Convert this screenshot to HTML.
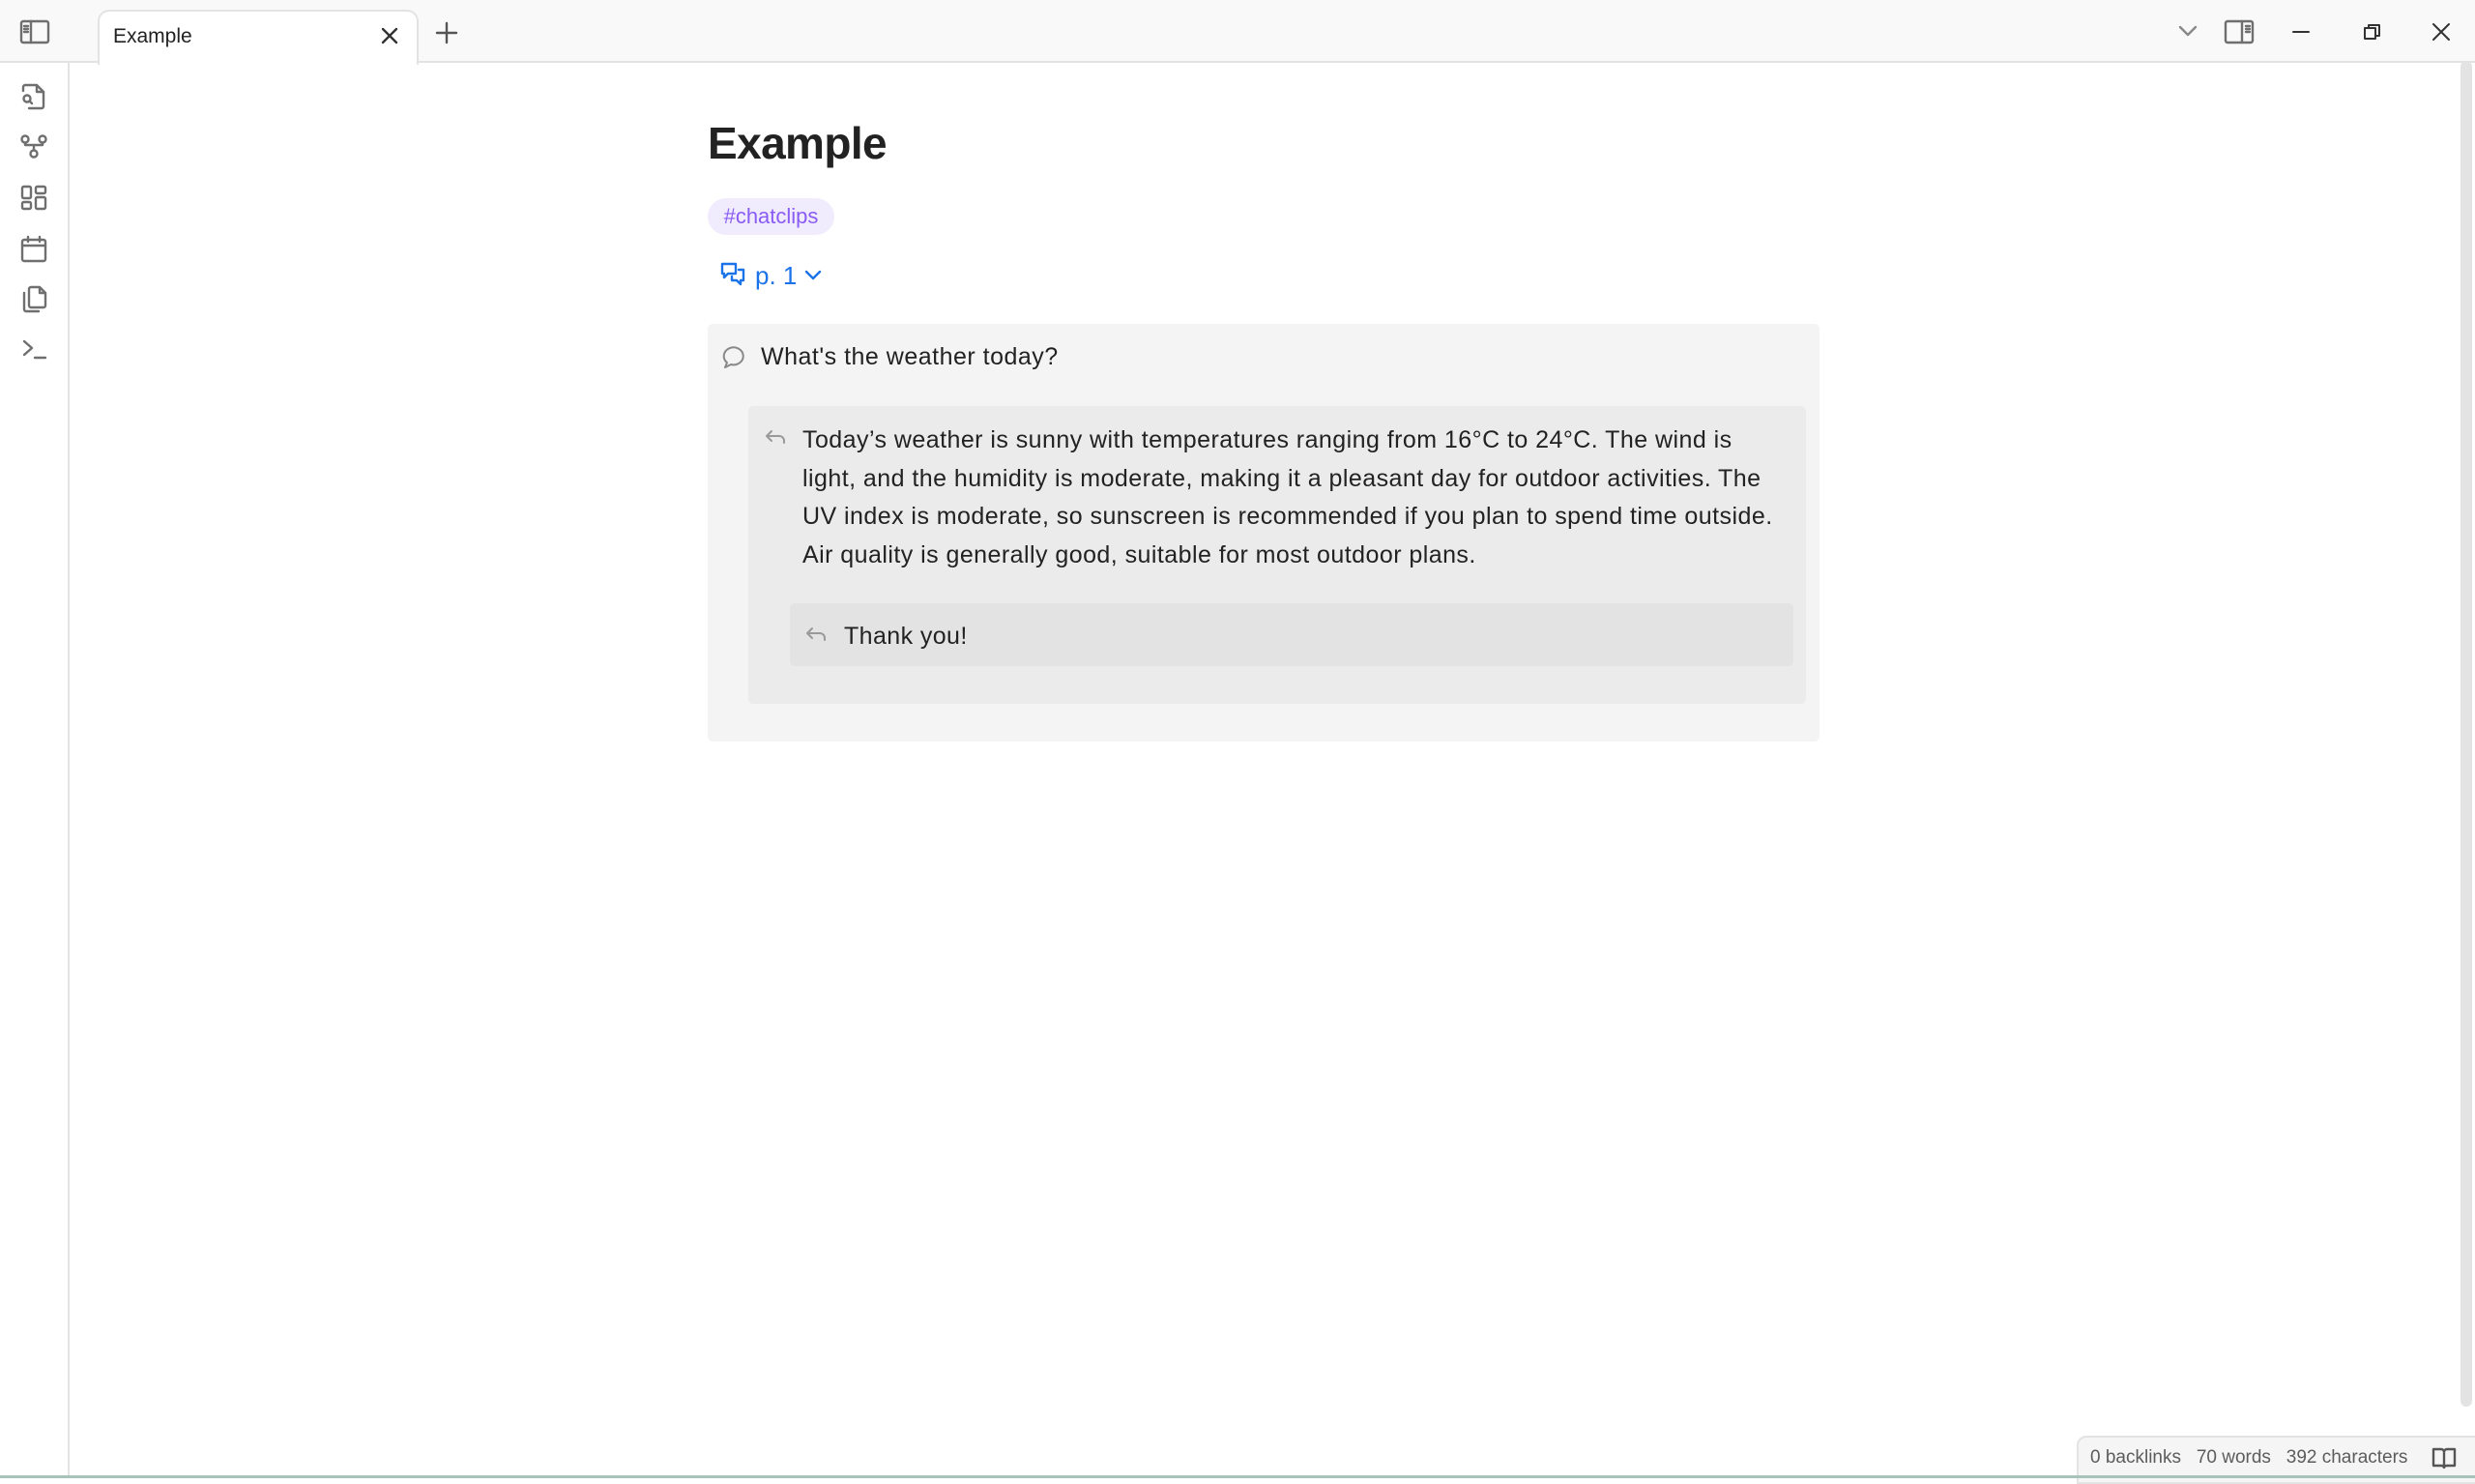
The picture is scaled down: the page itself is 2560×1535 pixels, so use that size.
<!DOCTYPE html>
<html><head><meta charset="utf-8"><style>
*{margin:0;padding:0;box-sizing:border-box}
body{width:2560px;height:1529px;background:#fff;font-family:"Liberation Sans",sans-serif;position:relative;overflow:hidden;color:#222}
.abs{position:absolute}
#top{left:0;top:0;width:2560px;height:65px;background:#f9f9f9;border-bottom:2px solid #e3e3e3}
#tab{left:101px;top:10px;width:332px;height:57px;background:#fff;border:2px solid #e3e3e3;border-bottom:none;border-radius:12px 12px 0 0}
#side{left:0;top:65px;width:72px;height:1464px;background:#fff;border-right:2px solid #e3e3e3}
svg{position:absolute;fill:none;stroke:#6f6f6f;stroke-width:2.4;stroke-linecap:round;stroke-linejoin:round}
.txt{white-space:nowrap;font-size:25px;color:#222}
</style></head><body>
<div id="top" class="abs"></div>
<div id="tab" class="abs"></div>
<div class="abs" style="left:117px;top:26px;font-size:21px;color:#222">Example</div>
<svg style="left:393px;top:27px" width="20" height="20" viewBox="0 0 20 20"><path d="M3 3L17 17M17 3L3 17" stroke="#333"/></svg>
<svg style="left:450px;top:22px" width="24" height="24" viewBox="0 0 24 24"><path d="M12 2V22M2 12H22" stroke="#555"/></svg>
<svg style="left:20px;top:20px" width="32" height="26" viewBox="0 0 32 26"><rect x="2" y="2" width="28" height="22" rx="2"/><path d="M12 2V24M5 7H9M5 10H9M5 13H9"/></svg>
<div id="side" class="abs"></div>
<svg style="left:20px;top:85px" width="30" height="30" viewBox="0 0 30 30"><path d="M4 9V5a2 2 0 0 1 2-2h12l7 7v15a2 2 0 0 1-2 2H10M18 3v7h7"/><circle cx="8" cy="17" r="3.5"/><path d="M10.5 19.5L13 22"/></svg>
<svg style="left:20px;top:138px" width="30" height="28" viewBox="0 0 30 28"><circle cx="6" cy="6" r="3.5"/><circle cx="24" cy="6" r="3.5"/><circle cx="15" cy="21" r="3.5"/><path d="M6 9.5V12H24V9.5M15 12V17.5"/></svg>
<svg style="left:20px;top:190px" width="30" height="30" viewBox="0 0 30 30"><rect x="3" y="3" width="9" height="12" rx="1.5"/><rect x="17" y="3" width="10" height="7" rx="1.5"/><rect x="3" y="19" width="9" height="7" rx="1.5"/><rect x="17" y="14" width="10" height="12" rx="1.5"/></svg>
<svg style="left:20px;top:243px" width="30" height="30" viewBox="0 0 30 30"><rect x="3" y="5" width="24" height="22" rx="2"/><path d="M3 11H27M9 2V7M21 2V7"/></svg>
<svg style="left:20px;top:295px" width="30" height="30" viewBox="0 0 30 30"><path d="M10 6V4a2 2 0 0 1 2-2h9l6 6v13a2 2 0 0 1-2 2H12a2 2 0 0 1-2-2zM21 2v6h6M5 8v17a2 2 0 0 0 2 2h13"/></svg>
<svg style="left:22px;top:350px" width="28" height="24" viewBox="0 0 28 24"><path d="M3 3L11 10L3 17M14 20H25"/></svg>
<svg style="left:2253px;top:25px" width="20" height="14" viewBox="0 0 20 14"><path d="M2 3L10 11L18 3" stroke="#888"/></svg>
<svg style="left:2300px;top:20px" width="32" height="26" viewBox="0 0 32 26"><rect x="2" y="2" width="28" height="22" rx="2"/><path d="M19 2V24M23 7H27M23 10H27M23 13H27"/></svg>
<svg style="left:2370px;top:25px" width="20" height="16" viewBox="0 0 20 16"><path d="M2 8H18" stroke="#333" stroke-width="2"/></svg>
<svg style="left:2443px;top:22px" width="22" height="22" viewBox="0 0 22 22"><rect x="3" y="7" width="11" height="11" stroke="#333" stroke-width="2"/><path d="M7 7V4H18V15H14" stroke="#333" stroke-width="2"/></svg>
<svg style="left:2514px;top:22px" width="22" height="22" viewBox="0 0 22 22"><path d="M3 3L19 19M19 3L3 19" stroke="#333" stroke-width="2"/></svg>
<div class="abs" style="left:2545px;top:63px;width:12px;height:1392px;background:#e3e3e3;border-radius:6px"></div>
<div class="abs" style="left:732px;top:121px;font-size:46px;font-weight:bold;color:#222;letter-spacing:-0.6px">Example</div>
<div class="abs" style="left:732px;top:205px;width:131px;height:38px;background:#f0ebfd;border-radius:19px;color:#8a5cf5;font-size:22px;line-height:38px;text-align:center">#chatclips</div>
<svg style="left:744px;top:270px" width="30" height="30" viewBox="0 0 30 30"><path d="M3 3H17V13H9L5 17V13H3zM20 9H25V20H22V24L18 20H13V16" stroke="#1a73e8"/></svg>
<div class="abs" style="left:781px;top:270px;font-size:26px;color:#1a73e8">p. 1</div>
<svg style="left:832px;top:278px" width="18" height="14" viewBox="0 0 18 14"><path d="M2 3L9 10L16 3" stroke="#1a73e8"/></svg>
<div class="abs" style="left:732px;top:335px;width:1150px;height:432px;background:#f4f4f4;border-radius:5px"></div>
<svg style="left:744px;top:355px" width="28" height="28" viewBox="0 0 28 28"><path d="M6 25L8 20A10 9 0 1 1 12 22Z" stroke="#888" stroke-width="2"/></svg>
<div class="abs txt" style="left:787px;top:355px;letter-spacing:0.5px">What's the weather today?</div>
<div class="abs" style="left:774px;top:420px;width:1094px;height:308px;background:#ebebeb;border-radius:5px"></div>
<svg style="left:790px;top:442px" width="24" height="20" viewBox="0 0 24 20"><path d="M8 4L3 9L8 14M3 9H16A5 5 0 0 1 21 14V16" stroke="#999" stroke-width="2"/></svg>
<div class="abs txt" style="left:830px;top:436px;line-height:39.5px;letter-spacing:0.45px">Today’s weather is sunny with temperatures ranging from 16°C to 24°C. The wind is<br>light, and the humidity is moderate, making it a pleasant day for outdoor activities. The<br>UV index is moderate, so sunscreen is recommended if you plan to spend time outside.<br>Air quality is generally good, suitable for most outdoor plans.</div>
<div class="abs" style="left:817px;top:624px;width:1038px;height:65px;background:#e3e3e3;border-radius:5px"></div>
<svg style="left:832px;top:646px" width="24" height="20" viewBox="0 0 24 20"><path d="M8 4L3 9L8 14M3 9H16A5 5 0 0 1 21 14V16" stroke="#999" stroke-width="2"/></svg>
<div class="abs txt" style="left:873px;top:644px;letter-spacing:0.4px">Thank you!</div>
<div class="abs" style="left:2148px;top:1485px;width:420px;height:50px;background:#f5f5f5;border:2px solid #e3e3e3;border-radius:10px 0 0 0"></div>
<div class="abs" style="left:2162px;top:1497px;font-size:19px;color:#5c5c5c;white-space:nowrap">0 backlinks&nbsp;&nbsp;&nbsp;70 words&nbsp;&nbsp;&nbsp;392 characters</div>
<svg style="left:2514px;top:1496px" width="28" height="26" viewBox="0 0 28 26"><path d="M3 3H11A3 3 0 0 1 14 6V22A3 3 0 0 0 11 20H3ZM25 3H17A3 3 0 0 0 14 6V22A3 3 0 0 1 17 20H25Z" stroke="#555"/></svg>
<div class="abs" style="left:0;top:1526px;width:2560px;height:3px;background:#a7c4b8"></div>
</body></html>
